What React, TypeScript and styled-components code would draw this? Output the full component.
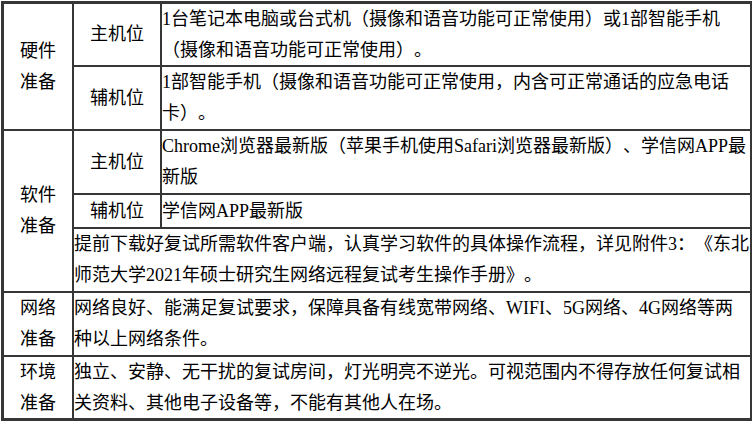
import { createGlobalStyle, styled } from 'styled-components';

const GlobalStyle = createGlobalStyle`
  html, body {
    margin: 0;
    padding: 0;
    background: #fff;
  }

  body {
    font-family: 'Liberation Serif', 'Noto Sans CJK SC', serif;
    font-size: 18px;
    color: #000;
    text-spacing-trim: space-all;
  }
`;

const Page = styled.div`
  padding: 1px 0 0 1px;
`;

const Table = styled.div`
  display: grid;
  grid-template-columns: 68px 86px 588px;
  grid-template-rows: 61px 62px 62px 32px 62px 62px 61px;
  gap: 2px;
  width: max-content;
  padding: 3px 2px 3px 3px;
  background: #363636;
`;

const Cell = styled.div<{ $row: string; $col: string; $center?: boolean }>`
  grid-row: ${({ $row }) => $row};
  grid-column: ${({ $col }) => $col};
  display: flex;
  align-items: center;
  justify-content: ${({ $center }) => ($center ? 'center' : 'flex-start')};
  text-align: ${({ $center }) => ($center ? 'center' : 'left')};
  background: #fff;
  line-height: 31px;
  overflow: hidden;
`;

const Text = styled.div`
  width: 100%;
`;

const App = () => {
  return (
    <Page>
      <GlobalStyle />
      <Table>
        <Cell $row="1 / 3" $col="1" $center>
          硬件
          <br />
          准备
        </Cell>
        <Cell $row="1" $col="2" $center>主机位</Cell>
        <Cell $row="1" $col="3">
          <Text>1台笔记本电脑或台式机（摄像和语音功能可正常使用）或1部智能手机（摄像和语音功能可正常使用）。</Text>
        </Cell>
        <Cell $row="2" $col="2" $center>辅机位</Cell>
        <Cell $row="2" $col="3">
          <Text>1部智能手机（摄像和语音功能可正常使用，内含可正常通话的应急电话卡）。</Text>
        </Cell>

        <Cell $row="3 / 6" $col="1" $center>
          软件
          <br />
          准备
        </Cell>
        <Cell $row="3" $col="2" $center>主机位</Cell>
        <Cell $row="3" $col="3">
          <Text>Chrome浏览器最新版（苹果手机使用Safari浏览器最新版）、学信网APP最新版</Text>
        </Cell>
        <Cell $row="4" $col="2" $center>辅机位</Cell>
        <Cell $row="4" $col="3">
          <Text>学信网APP最新版</Text>
        </Cell>
        <Cell $row="5" $col="2 / 4">
          <Text>
            提前下载好复试所需软件客户端，认真学习软件的具体操作流程，详见附件3：《东北师范大学2021年硕士研究生网络远程复试考生操作手册》。
          </Text>
        </Cell>

        <Cell $row="6" $col="1" $center>
          网络
          <br />
          准备
        </Cell>
        <Cell $row="6" $col="2 / 4">
          <Text>网络良好、能满足复试要求，保障具备有线宽带网络、WIFI、5G网络、4G网络等两种以上网络条件。</Text>
        </Cell>

        <Cell $row="7" $col="1" $center>
          环境
          <br />
          准备
        </Cell>
        <Cell $row="7" $col="2 / 4">
          <Text>独立、安静、无干扰的复试房间，灯光明亮不逆光。可视范围内不得存放任何复试相关资料、其他电子设备等，不能有其他人在场。</Text>
        </Cell>
      </Table>
    </Page>
  );
};

export default App;
